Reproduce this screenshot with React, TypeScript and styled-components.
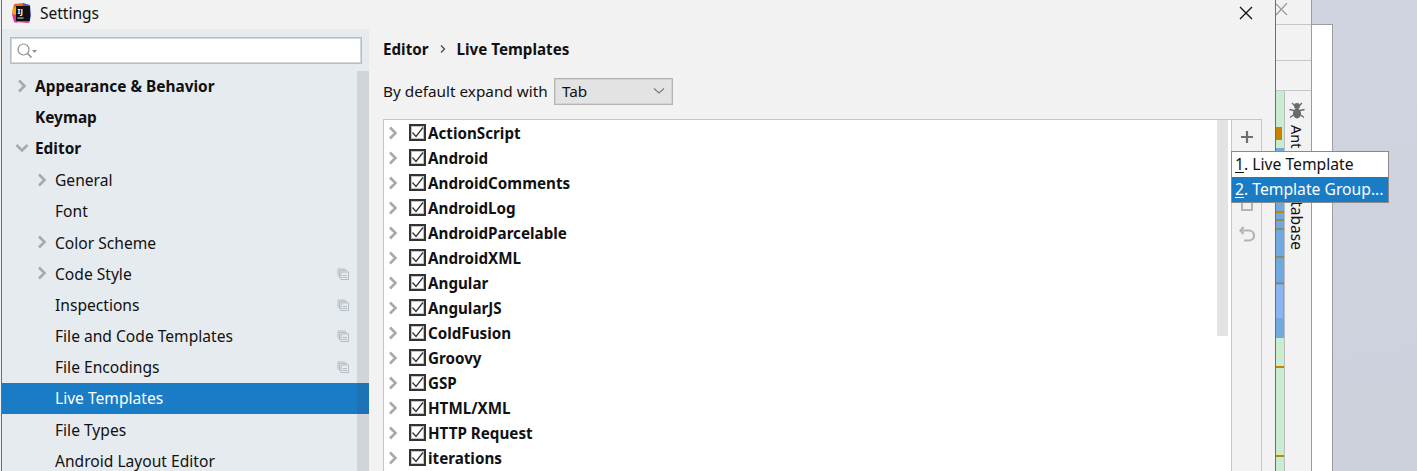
import React from 'react'
import styled, { createGlobalStyle } from 'styled-components'

const GlobalStyle = createGlobalStyle`
  html, body {
    margin: 0;
    padding: 0;
    height: 471px;
    overflow: hidden;
    background: #f0f0f0;
    font-family: "Noto Sans", "Open Sans", sans-serif;
    font-size: 15.5px;
    color: #111;
  }
`

const Screen = styled('div')`
  display: flex;
  width: 1417px;
  height: 471px;
  padding-left: 1px;
  box-sizing: border-box;
  overflow: hidden;
  position: relative;
`

const Dialog = styled('div')`
  width: 1275px;
  flex: none;
  height: 100%;
  box-sizing: border-box;
  border-left: 1px solid #6f6f6f;
  border-right: 1px solid #6f6f6f;
  background: #f2f2f2;
  display: flex;
  flex-direction: column;
`

const TitleBar = styled('div')`
  height: 29px;
  flex: none;
  display: flex;
  align-items: center;
  padding: 0 22px 3px 9px;
  box-sizing: border-box;
  gap: 8px;
`

const TitleText = styled('span')`
  flex: 1;
  line-height: 20px;
`

const Body = styled('div')`
  flex: 1;
  display: flex;
  min-height: 0;
`

const Sidebar = styled('div')`
  width: 367px;
  flex: none;
  background: #e6ebf0;
  display: flex;
  flex-direction: column;
  position: relative;
  overflow: hidden;
`

const SearchBox = styled('div')`
  margin: 8px 7px 7px 8px;
  height: 27px;
  flex: none;
  box-sizing: border-box;
  background: #fff;
  border: 1px solid #b9bdc0;
  outline: 1px solid #d3d7da;
  outline-offset: -2px;
  display: flex;
  align-items: center;
  padding-left: 6px;
`

const SidebarScroll = styled('div')`
  position: absolute;
  top: 42px;
  right: 0;
  bottom: 0;
  width: 12px;
  background: rgba(60, 60, 60, 0.12);
`

const Tree = styled('div')`
  display: flex;
  flex-direction: column;
  flex: none;
`

const TreeRow = styled('div')<{ $depth: number; $selected?: boolean; $bold?: boolean }>`
  height: 31.2px;
  flex: none;
  display: flex;
  align-items: center;
  box-sizing: border-box;
  padding-left: ${(p) => (p.$depth === 0 ? 33 : 53)}px;
  padding-right: 20px;
  position: relative;
  background: ${(p) => (p.$selected ? '#1a7cc4' : 'transparent')};
  color: ${(p) => (p.$selected ? '#fff' : '#111')};
  font-weight: ${(p) => (p.$bold ? 700 : 400)};
  font-size: ${(p) => (p.$bold ? 15.4 : 15.6)}px;
`

const TreeLabel = styled('span')`
  flex: 1;
  white-space: nowrap;
`

const TreeArrow = styled('span')<{ $depth: number }>`
  position: absolute;
  left: ${(p) => (p.$depth === 0 ? 13 : 33)}px;
  top: 8px;
  width: 14px;
  height: 14px;
  display: flex;
`

const Main = styled('div')`
  flex: 1;
  min-width: 0;
  display: flex;
  flex-direction: column;
  padding-left: 14px;
`

const Breadcrumb = styled('div')`
  height: 40px;
  display: flex;
  align-items: center;
  font-weight: 700;
  font-size: 15.2px;
  gap: 10px;
`

const ExpandRow = styled('div')`
  height: 27px;
  margin-top: 9px;
  display: flex;
  align-items: center;
  gap: 6px;
  font-size: 15.3px;
`

const ExpandLabel = styled('span')`
  width: 165px;
  white-space: nowrap;
  padding-bottom: 2px;
`

const SelectBox = styled('div')`
  width: 119px;
  height: 27px;
  box-sizing: border-box;
  background: #e3e3e3;
  border: 1px solid #b4b4b4;
  outline: 1px solid #d2d2d2;
  outline-offset: -2px;
  display: flex;
  align-items: center;
  justify-content: space-between;
  padding: 0 7px 2px 7px;
`

const ListArea = styled('div')`
  flex: 1;
  min-height: 0;
  margin-top: 14px;
  display: flex;
  margin-right: 13px;
`

const TemplateList = styled('div')`
  flex: 1;
  background: #fff;
  border: 1px solid #c6c6c6;
  border-width: 1px 0 0 1px;
  position: relative;
  overflow: hidden;
`

const ListScroll = styled('div')`
  position: absolute;
  top: 0;
  right: 3px;
  width: 11px;
  height: 216px;
  background: #e3e3e3;
`

const GroupRow = styled('div')`
  height: 25px;
  display: flex;
  align-items: center;
  font-weight: 700;
  font-size: 15.2px;
`

const GroupArrow = styled('span')`
  width: 25px;
  display: flex;
  padding-left: 2px;
  box-sizing: border-box;
`

const CheckBox = styled('span')`
  width: 17px;
  height: 17px;
  flex: none;
  box-sizing: border-box;
  border: 2px solid #333;
  box-shadow: inset 0 0 0 1px #c4c4c4;
  background: #fff;
  display: flex;
  align-items: center;
  justify-content: center;
  margin-right: 2px;
`

const SideTools = styled('div')`
  width: 31px;
  flex: none;
  box-sizing: border-box;
  background: #f2f2f2;
  border: 1px solid #c6c6c6;
  border-bottom: none;
  display: flex;
  flex-direction: column;
  align-items: center;
  padding-top: 10px;
`

const ToolSlot = styled('span')<{ $top?: number }>`
  display: flex;
  margin-top: ${(p) => p.$top ?? 0}px;
`

const BackStrip = styled('div')`
  width: 36px;
  flex: none;
  height: 100%;
  box-sizing: border-box;
  background: #f2f2f2;
  border-right: 1px solid #9c9c9c;
  display: flex;
  flex-direction: column;
`

const BackHead = styled('div')<{ $height: number }>`
  height: ${(p) => p.$height}px;
  flex: none;
  box-sizing: border-box;
  border-bottom: 1px solid #c6c6c6;
  overflow: hidden;
`

const BackBody = styled('div')`
  flex: 1;
  display: flex;
  min-height: 0;
`

const MarkerStripe = styled('div')`
  width: 8px;
  flex: none;
  position: relative;
  background: #c9ebcf;
  border-right: 1px solid #bdbdbd;
`

const Marker = styled('i')<{ $top: number; $height: number; $color: string; $width?: number }>`
  position: absolute;
  left: 0;
  top: ${(p) => p.$top}px;
  height: ${(p) => p.$height}px;
  width: ${(p) => p.$width ?? 8}px;
  background: ${(p) => p.$color};
`

const ToolWindowBar = styled('div')`
  flex: 1;
  display: flex;
  flex-direction: column;
  align-items: center;
  padding-top: 11px;
  padding-right: 3px;
`

const VerticalLabel = styled('span')<{ $top: number; $size: number }>`
  writing-mode: vertical-rl;
  margin-top: ${(p) => p.$top}px;
  font-size: ${(p) => p.$size}px;
  line-height: 16px;
  white-space: nowrap;
`

const WhitePane = styled('div')`
  width: 21px;
  flex: none;
  margin-top: 24px;
  box-sizing: border-box;
  background: #fff;
  border-top: 1px solid #9c9c9c;
  border-right: 1px solid #9c9c9c;
`

const Desktop = styled('div')`
  flex: 1;
  background: linear-gradient(170deg, #d0d4e0, #cdd1dc);
`

const DesktopCorner = styled('div')`
  position: absolute;
  left: 1312px;
  top: 0;
  width: 21px;
  height: 24px;
  background: #d0d4e0;
`

const PopupMenu = styled('div')`
  position: absolute;
  left: 1231px;
  top: 151px;
  width: 158px;
  box-sizing: border-box;
  background: #fff;
  border: 1px solid #8a8a8a;
  font-size: 15.7px;
`

const MenuItem = styled('div')<{ $active?: boolean }>`
  height: 25px;
  display: flex;
  align-items: center;
  padding: 0 0 2px 3px;
  box-sizing: border-box;
  white-space: pre;
  background: ${(p) => (p.$active ? '#1a7cc4' : '#fff')};
  color: ${(p) => (p.$active ? '#fff' : '#111')};
`

const Mnemonic = styled('span')`
  text-decoration: underline;
  text-underline-offset: 2px;
`

const Chevron = ({ color = '#a9a9a9' }: { color?: string }) => (
  <svg width="14" height="14" viewBox="0 0 14 14" fill="none">
    <path d="M4 1.5 L9.5 7 L4 12.5" stroke={color} strokeWidth="2.6" />
  </svg>
)

const ChevronDown = () => (
  <svg width="14" height="14" viewBox="0 0 14 14" fill="none">
    <path d="M1.5 4 L7 9.5 L12.5 4" stroke="#a9a9a9" strokeWidth="2.6" />
  </svg>
)

const CopyMark = () => (
  <svg width="12" height="12" viewBox="0 0 12 12" fill="none" stroke="#b4bcc4" strokeWidth="1">
    <path d="M8.5 1 H1 V8.5" />
    <path d="M10 2.5 H2.5 V10" />
    <rect x="4" y="4" width="7.5" height="7.5" />
    <path d="M5.5 7.5 H10 M5.5 9.5 H10" />
  </svg>
)

const AppLogo = () => (
  <svg width="21" height="21" viewBox="0 0 21 21">
    <path d="M3 1 L13 0 L12 8 L1 12 Z" fill="#f26522" />
    <path d="M1 11 L5 9 L6 20 L3 19 Z" fill="#e8358f" />
    <path d="M5 19 L18 20 L14 8 Z" fill="#d6338f" />
    <path d="M12 0 L19 2 L20 13 L18 20 L12 8 Z" fill="#4a55d8" />
    <path d="M1 7 L6 3 L6 11 L2 12 Z" fill="#f9a31a" />
    <rect x="5" y="3" width="14" height="15" fill="#111" />
    <text x="6.5" y="11" fontSize="7.5" fontWeight="700" fill="#fff" fontFamily="Noto Sans, sans-serif">
      IJ
    </text>
    <rect x="6.5" y="14.5" width="6" height="1" fill="#ddd" />
  </svg>
)

const sections: { label: string; depth: number; bold?: boolean; arrow?: 'right' | 'down'; copy?: boolean; selected?: boolean }[] = [
  { label: 'Appearance & Behavior', depth: 0, bold: true, arrow: 'right' },
  { label: 'Keymap', depth: 0, bold: true },
  { label: 'Editor', depth: 0, bold: true, arrow: 'down' },
  { label: 'General', depth: 1, arrow: 'right' },
  { label: 'Font', depth: 1 },
  { label: 'Color Scheme', depth: 1, arrow: 'right' },
  { label: 'Code Style', depth: 1, arrow: 'right', copy: true },
  { label: 'Inspections', depth: 1, copy: true },
  { label: 'File and Code Templates', depth: 1, copy: true },
  { label: 'File Encodings', depth: 1, copy: true },
  { label: 'Live Templates', depth: 1, selected: true },
  { label: 'File Types', depth: 1 },
  { label: 'Android Layout Editor', depth: 1 },
]

const groups = [
  'ActionScript',
  'Android',
  'AndroidComments',
  'AndroidLog',
  'AndroidParcelable',
  'AndroidXML',
  'Angular',
  'AngularJS',
  'ColdFusion',
  'Groovy',
  'GSP',
  'HTML/XML',
  'HTTP Request',
  'iterations',
]

// y positions are relative to the stripe, which starts below the third header line
const markers = [
  { top: 36, height: 13, color: '#c78200', width: 6 },
  { top: 57, height: 190, color: '#6fa9dd' },
  { top: 120, height: 2, color: '#c78200' },
  { top: 128, height: 2, color: '#8a8a6a' },
  { top: 137, height: 2, color: '#8a8a6a' },
  { top: 165, height: 2, color: '#8a8a6a' },
  { top: 191, height: 2, color: '#7f8a80' },
  { top: 194, height: 33, color: '#8cb4f5', width: 7 },
  { top: 275, height: 2, color: '#c78200' },
  { top: 364, height: 2, color: '#c78200' },
]

function App() {
  return (
    <Screen>
      <GlobalStyle />
      <Dialog>
        <TitleBar>
          <AppLogo />
          <TitleText>Settings</TitleText>
          <svg width="14" height="14" viewBox="0 0 14 14" fill="none">
            <path d="M1 1 L13 13 M13 1 L1 13" stroke="#111" strokeWidth="1.3" />
          </svg>
        </TitleBar>
        <Body>
          <Sidebar>
            <SearchBox>
              <svg width="22" height="16" viewBox="0 0 22 16" fill="none">
                <circle cx="6.5" cy="6.5" r="5.5" stroke="#8f8f8f" strokeWidth="1.2" />
                <path d="M10.5 10.5 L14.5 14.5" stroke="#8f8f8f" strokeWidth="1.6" />
                <path d="M15 7 H20 L17.5 10 Z" fill="#8f8f8f" />
              </svg>
            </SearchBox>
            <Tree>
              {sections.map((s) => (
                <TreeRow key={s.label} $depth={s.depth} $bold={s.bold} $selected={s.selected}>
                  {s.arrow && <TreeArrow $depth={s.depth}>{s.arrow === 'down' ? <ChevronDown /> : <Chevron />}</TreeArrow>}
                  <TreeLabel>{s.label}</TreeLabel>
                  {s.copy && <CopyMark />}
                </TreeRow>
              ))}
            </Tree>
            <SidebarScroll />
          </Sidebar>
          <Main>
            <Breadcrumb>
              <span>Editor</span>
              <svg width="8" height="10" viewBox="0 0 8 10" fill="none">
                <path d="M2 1.5 L5.5 5 L2 8.5" stroke="#444" strokeWidth="1.2" />
              </svg>
              <span>Live Templates</span>
            </Breadcrumb>
            <ExpandRow>
              <ExpandLabel>By default expand with</ExpandLabel>
              <SelectBox>
                <span>Tab</span>
                <svg width="12" height="8" viewBox="0 0 12 8" fill="none">
                  <path d="M1 1.5 L6 6 L11 1.5" stroke="#777" strokeWidth="1.1" />
                </svg>
              </SelectBox>
            </ExpandRow>
            <ListArea>
              <TemplateList>
                {groups.map((g) => (
                  <GroupRow key={g}>
                    <GroupArrow>
                      <Chevron />
                    </GroupArrow>
                    <CheckBox>
                      <svg width="13" height="13" viewBox="0 0 13 13" fill="none">
                        <path d="M1.5 6.5 L5 10.5 L12 1.5" stroke="#333" strokeWidth="1.3" />
                      </svg>
                    </CheckBox>
                    <span>{g}</span>
                  </GroupRow>
                ))}
                <ListScroll />
              </TemplateList>
              <SideTools>
                <svg width="14" height="14" viewBox="0 0 14 14" fill="none">
                  <path d="M7 1 V13 M1 7 H13" stroke="#6e6e6e" strokeWidth="2.2" />
                </svg>
                <ToolSlot $top={52}>
                  <svg width="14" height="16" viewBox="0 0 14 16" fill="none" stroke="#b4b4b4" strokeWidth="2">
                    <rect x="2" y="4" width="10" height="10" />
                  </svg>
                </ToolSlot>
                <ToolSlot $top={14}>
                  <svg width="16" height="16" viewBox="0 0 16 16" fill="none">
                    <path d="M4.5 1 L1.5 4.5 L4.5 8" stroke="#b4b4b4" strokeWidth="2.2" />
                    <path d="M1.5 4.5 H10 A4.5 4.5 0 0 1 10 14.5 H5" stroke="#b4b4b4" strokeWidth="2.2" />
                  </svg>
                </ToolSlot>
              </SideTools>
            </ListArea>
          </Main>
        </Body>
      </Dialog>
      <BackStrip>
        <BackHead $height={25}>
          <svg width="14" height="14" viewBox="0 0 14 14" fill="none">
            <path d="M0 1 L11 12 M11 0 L0 12" stroke="#9a9a9a" strokeWidth="1.2" />
          </svg>
        </BackHead>
        <BackHead $height={36} />
        <BackHead $height={30} />
        <BackBody>
          <MarkerStripe>
            {markers.map((m) => (
              <Marker key={m.top} $top={m.top} $height={m.height} $color={m.color} $width={m.width} />
            ))}
          </MarkerStripe>
          <ToolWindowBar>
            <svg width="16" height="17" viewBox="0 0 16 17" fill="#6a6a6a">
              <ellipse cx="8" cy="4" rx="3" ry="3" />
              <ellipse cx="8" cy="11.5" rx="4" ry="5" />
              <path d="M3 1 L6 4 M13 1 L10 4 M0.5 7.5 L5 8.5 M15.5 7.5 L11 8.5 M1 15.5 L5 12.5 M15 15.5 L11 12.5" stroke="#6a6a6a" strokeWidth="1.3" />
            </svg>
            <VerticalLabel $top={6} $size={14.5}>Ant</VerticalLabel>
            <VerticalLabel $top={33} $size={15.6}>Database</VerticalLabel>
          </ToolWindowBar>
        </BackBody>
      </BackStrip>
      <WhitePane />
      <Desktop />
      <DesktopCorner />
      <PopupMenu>
        <MenuItem>
          <Mnemonic>1</Mnemonic>. Live Template
        </MenuItem>
        <MenuItem $active>
          <Mnemonic>2</Mnemonic>. Template Group...
        </MenuItem>
      </PopupMenu>
    </Screen>
  )
}

export default App
